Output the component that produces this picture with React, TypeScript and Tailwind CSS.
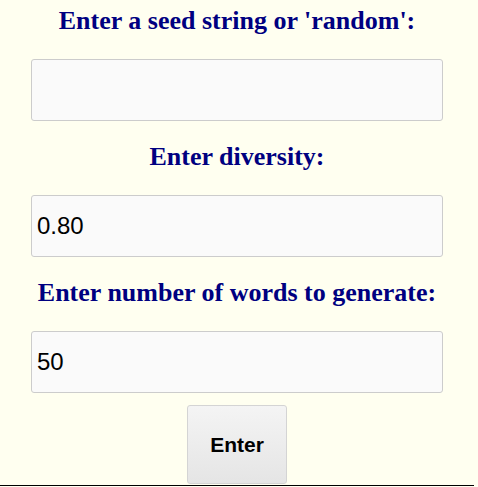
import { useState } from "react";

function App() {
  const [form, setForm] = useState({
    seed: "",
    diversity: "0.80",
    words: "50",
  }); //form values.

  const handleChange = (e: React.ChangeEvent<HTMLInputElement>) => {
    setForm({ ...form, [e.target.name]: e.target.value });
  };

  const heading =
    "text-[26px] leading-[30px] font-bold text-[#000080] text-center [font-family:'Liberation_Serif',serif]";
  const field =
    "w-full h-[62px] px-[5px] rounded-[3px] border border-[#cccccc] bg-[#fafafa] text-[24px] text-black outline-none [font-family:'Liberation_Sans',sans-serif]";

  return (
    <div className="min-h-[487px] bg-[#fffff0]">
      <form
        className="flex flex-col w-[474px] pt-[6px] h-[486px] border-b border-black"
        onSubmit={(e) => e.preventDefault()}
      >
        <h2 className={heading}>Enter a seed string or 'random':</h2>
        <div className="pl-[31px] pr-[31px] mt-[23px]">
          <input name="seed" type="text" className={field} value={form.seed} onChange={handleChange} />
        </div>
        <h2 className={`${heading} mt-[21px]`}>Enter diversity:</h2>
        <div className="pl-[31px] pr-[31px] mt-[23px]">
          <input name="diversity" type="text" className={field} value={form.diversity} onChange={handleChange} />
        </div>
        <h2 className={`${heading} mt-[21px]`}>Enter number of words to generate:</h2>
        <div className="pl-[31px] pr-[31px] mt-[23px]">
          <input name="words" type="text" className={field} value={form.words} onChange={handleChange} />
        </div>
        <div className="flex justify-center mt-[12px]">
          <button
            type="submit"
            className="w-[100px] h-[79px] rounded-[3px] border border-[#d4d4d4] bg-gradient-to-b from-[#f4f4f4] to-[#e5e5e5] text-[21px] font-bold text-black [font-family:'Liberation_Sans',sans-serif]"
          >
            Enter
          </button>
        </div>
      </form>
    </div>
  );
}

export default App;
